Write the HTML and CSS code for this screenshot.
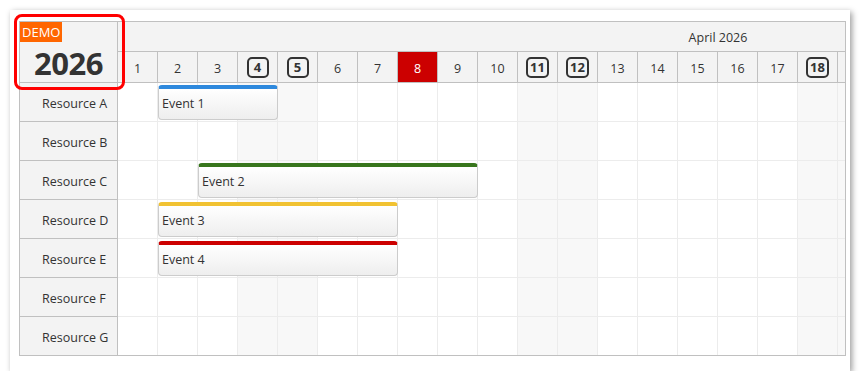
FILE: index.html
```html
<!DOCTYPE html>
<html lang="en">
<head>
<meta charset="utf-8">
<title>Scheduler</title>
<link rel="stylesheet" href="styles.css">
</head>
<body>
<div class="panel">
  <div class="scheduler">
    <div class="rh-col">
      <div class="corner">
        <span class="demo">DEMO</span>
        <span class="year">2026</span>
      </div>
      <div class="rh">Resource A</div>
      <div class="rh">Resource B</div>
      <div class="rh">Resource C</div>
      <div class="rh">Resource D</div>
      <div class="rh">Resource E</div>
      <div class="rh">Resource F</div>
      <div class="rh last">Resource G</div>
    </div>
    <div class="tl-col">
      <div class="tl-inner">
        <div class="month">April 2026</div>
        <div class="days">
          <div class="day">1</div>
          <div class="day">2</div>
          <div class="day">3</div>
          <div class="day"><span class="wk">4</span></div>
          <div class="day"><span class="wk">5</span></div>
          <div class="day">6</div>
          <div class="day">7</div>
          <div class="day today">8</div>
          <div class="day">9</div>
          <div class="day">10</div>
          <div class="day"><span class="wk">11</span></div>
          <div class="day"><span class="wk">12</span></div>
          <div class="day">13</div>
          <div class="day">14</div>
          <div class="day">15</div>
          <div class="day">16</div>
          <div class="day">17</div>
          <div class="day"><span class="wk">18</span></div>
          <div class="day"></div>
        </div>

        <div class="row">
          <div class="cells"><i></i><i></i><i></i><i class="we"></i><i class="we"></i><i></i><i></i><i></i><i></i><i></i><i class="we"></i><i class="we"></i><i></i><i></i><i></i><i></i><i></i><i class="we"></i><i class="we"></i></div>
          <div class="events"><div class="event blue" style="grid-column: 2 / span 3">Event 1</div></div>
        </div>
        <div class="row">
          <div class="cells"><i></i><i></i><i></i><i class="we"></i><i class="we"></i><i></i><i></i><i></i><i></i><i></i><i class="we"></i><i class="we"></i><i></i><i></i><i></i><i></i><i></i><i class="we"></i><i class="we"></i></div>
        </div>
        <div class="row">
          <div class="cells"><i></i><i></i><i></i><i class="we"></i><i class="we"></i><i></i><i></i><i></i><i></i><i></i><i class="we"></i><i class="we"></i><i></i><i></i><i></i><i></i><i></i><i class="we"></i><i class="we"></i></div>
          <div class="events"><div class="event green" style="grid-column: 3 / span 7">Event 2</div></div>
        </div>
        <div class="row">
          <div class="cells"><i></i><i></i><i></i><i class="we"></i><i class="we"></i><i></i><i></i><i></i><i></i><i></i><i class="we"></i><i class="we"></i><i></i><i></i><i></i><i></i><i></i><i class="we"></i><i class="we"></i></div>
          <div class="events"><div class="event yellow" style="grid-column: 2 / span 6">Event 3</div></div>
        </div>
        <div class="row">
          <div class="cells"><i></i><i></i><i></i><i class="we"></i><i class="we"></i><i></i><i></i><i></i><i></i><i></i><i class="we"></i><i class="we"></i><i></i><i></i><i></i><i></i><i></i><i class="we"></i><i class="we"></i></div>
          <div class="events"><div class="event red" style="grid-column: 2 / span 6">Event 4</div></div>
        </div>
        <div class="row">
          <div class="cells"><i></i><i></i><i></i><i class="we"></i><i class="we"></i><i></i><i></i><i></i><i></i><i></i><i class="we"></i><i class="we"></i><i></i><i></i><i></i><i></i><i></i><i class="we"></i><i class="we"></i></div>
        </div>
        <div class="row last">
          <div class="cells"><i></i><i></i><i></i><i class="we"></i><i class="we"></i><i></i><i></i><i></i><i></i><i></i><i class="we"></i><i class="we"></i><i></i><i></i><i></i><i></i><i></i><i class="we"></i><i class="we"></i></div>
        </div>
      </div>
    </div>
  </div>
  <div class="highlight"></div>
</div>
</body>
</html>
```

FILE: styles.css
```css
* { box-sizing: border-box; }

html, body {
  margin: 0;
  padding: 0;
  background: #ffffff;
}

body {
  font-family: "Open Sans", "Noto Sans", sans-serif;
  font-size: 12px;
  color: #333333;
}

.panel {
  position: relative;
  margin: 10px 0 0 10px;
  width: 840px;
  height: 361px;
  padding: 11px 0 0 9px;
  background: #ffffff;
  box-shadow: 2px 2px 6px rgba(0, 0, 0, 0.4);
}

.scheduler {
  display: flex;
  width: 827px;
  height: 335px;
  border: 1px solid #c0c0c0;
}

.rh-col {
  width: 98px;
  flex: none;
  border-right: 1px solid #c0c0c0;
  background: #f3f3f3;
  display: flex;
  flex-direction: column;
}

.corner {
  height: 61px;
  border-bottom: 1px solid #c0c0c0;
  display: flex;
  flex-direction: column;
  align-items: flex-start;
  overflow: hidden;
}

.demo {
  background: #ff6600;
  color: #ffffff;
  font-size: 13px;
  line-height: 20px;
  padding: 0 2px 0 2px;
  flex: none;
}

.year {
  align-self: stretch;
  text-align: center;
  font-size: 31px;
  font-weight: 700;
  line-height: 36px;
  color: #333333;
  margin-top: 3px;
  letter-spacing: -0.5px;
  flex: none;
}

.rh {
  height: 39px;
  border-bottom: 1px solid #c0c0c0;
  display: flex;
  align-items: center;
  padding-left: 22px;
  padding-top: 2px;
  font-size: 12.5px;
  color: #333333;
}

.rh.last { border-bottom: 0; height: 38px; }

.tl-col {
  flex: 1;
  overflow: hidden;
}

.tl-inner {
  width: 1200px;
}

.month {
  height: 30px;
  border-bottom: 1px solid #c0c0c0;
  background: #f3f3f3;
  display: flex;
  align-items: center;
  justify-content: center;
  font-size: 12.5px;
  padding-top: 1px;
}

.days {
  height: 31px;
  display: grid;
  grid-template-columns: repeat(19, 40px);
  border-bottom: 1px solid #c0c0c0;
  background: #f3f3f3;
}

.day {
  border-right: 1px solid #c0c0c0;
  display: flex;
  align-items: center;
  justify-content: center;
  font-size: 12.5px;
  padding-top: 2px;
}

.day.today {
  background: #cc0000;
  color: #ffffff;
}

.wk {
  display: inline-block;
  min-width: 22px;
  height: 21px;
  line-height: 17px;
  padding: 0 2px;
  border: 2px solid #333333;
  border-radius: 5px;
  text-align: center;
  font-weight: 700;
  font-size: 13px;
  margin-top: -1px;
}

.row {
  height: 39px;
  display: grid;
  grid-template-columns: 760px;
  grid-template-rows: 38px;
  border-bottom: 1px solid #ececec;
}

.row.last { border-bottom: 0; height: 38px; }

.cells,
.events {
  grid-area: 1 / 1;
  display: grid;
  grid-template-columns: repeat(19, 40px);
  grid-template-rows: 38px;
}

.cells i {
  border-right: 1px solid #ececec;
  background: #ffffff;
}

.cells i.we { background: #f8f8f8; }

.event {
  grid-row: 1;
  align-self: start;
  margin-top: 2px;
  height: 35px;
  border: 1px solid #cccccc;
  border-top-width: 4px;
  border-radius: 4px;
  background: linear-gradient(to bottom, #ffffff 0%, #eeeeee 100%);
  padding: 6px 0 0 3px;
  font-size: 12.5px;
  color: #333333;
  white-space: nowrap;
  overflow: hidden;
}

.event.blue { border-top-color: #2e89dd; }
.event.green { border-top-color: #38761d; }
.event.yellow { border-top-color: #f1c232; }
.event.red { border-top-color: #cc0000; }

.highlight {
  position: absolute;
  left: 4px;
  top: 4px;
  width: 111px;
  height: 76px;
  border: 3px solid #ff0000;
  border-radius: 8px;
  pointer-events: none;
}
```
